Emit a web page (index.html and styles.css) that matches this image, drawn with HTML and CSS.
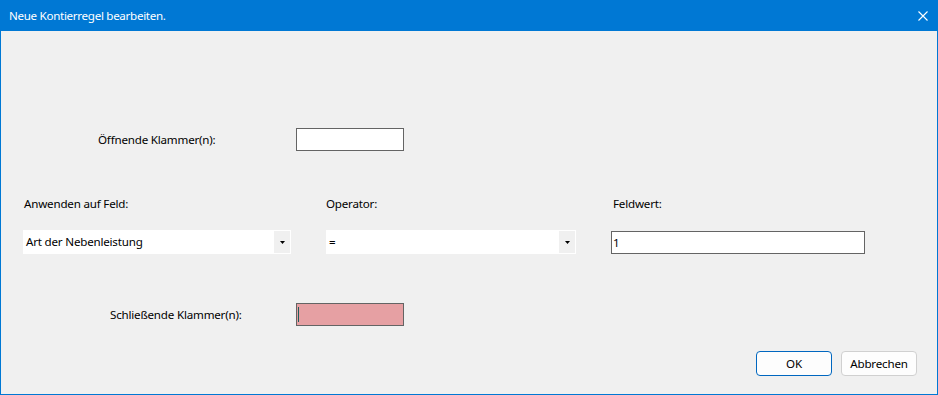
FILE: index.html
```html
<!DOCTYPE html>
<html>
<head>
    <title>Neue Kontierregel bearbeiten.</title>
    <link rel="stylesheet" href="styles.css">
</head>
<body>

<div class="dialog">
    <div class="titlebar">
        <span class="title">Neue Kontierregel bearbeiten.</span>
        <svg class="close" width="10" height="10" viewBox="0 0 10 10">
            <path d="M0.5 0.5 L9.5 9.5 M9.5 0.5 L0.5 9.5" stroke="#fff" stroke-width="1.1" fill="none"/>
        </svg>
    </div>

    <div class="content">
        <div class="bracket-row">
            <div class="bracket-label open">Öffnende Klammer(n):</div>
            <div class="box"></div>
        </div>

        <div class="fields">
            <div class="field">
                <div class="field-label">Anwenden auf Feld:</div>
                <div class="combo wide">
                    <span class="combo-text">Art der Nebenleistung</span>
                    <span class="combo-btn">
                        <svg width="5" height="3" viewBox="0 0 5 3"><polygon points="0,0 5,0 2.5,3" fill="#000"/></svg>
                    </span>
                </div>
            </div>
            <div class="field">
                <div class="field-label op">Operator:</div>
                <div class="combo">
                    <span class="combo-text">=</span>
                    <span class="combo-btn">
                        <svg width="5" height="3" viewBox="0 0 5 3"><polygon points="0,0 5,0 2.5,3" fill="#000"/></svg>
                    </span>
                </div>
            </div>
            <div class="field">
                <div class="field-label val">Feldwert:</div>
                <div class="textbox">1</div>
            </div>
        </div>

        <div class="bracket-row closing">
            <div class="bracket-label close-label">Schließende Klammer(n):</div>
            <div class="box invalid"><span class="caret"></span></div>
        </div>

        <div class="buttons">
            <button class="btn default">OK</button>
            <button class="btn">Abbrechen</button>
        </div>
    </div>
</div>

</body>
</html>
```

FILE: styles.css
```css
body {
    margin: 0;
    font-family: "Noto Sans", "Open Sans", sans-serif;
    font-size: 11.6px;
    letter-spacing: -0.2px;
    color: #000;
}

.dialog {
    width: 938px;
    height: 395px;
    box-sizing: border-box;
    border: 1px solid #0078d4;
    border-top: none;
    background: #f0f0f0;
    display: flex;
    flex-direction: column;
}

.titlebar {
    height: 31px;
    background: #0078d4;
    color: #fff;
    display: flex;
    align-items: center;
    justify-content: space-between;
    padding: 0 9px 0 9px;
    margin: 0 -1px;
    flex-shrink: 0;
}

.title {
    line-height: 16px;
    letter-spacing: -0.3px;
}

.close {
    margin-right: 1px;
}

.content {
    padding-top: 97px;
    display: flex;
    flex-direction: column;
}

.bracket-row {
    display: flex;
    align-items: center;
}

.bracket-label {
    box-sizing: border-box;
    width: 295px;
    line-height: 16px;
}

.bracket-label.open {
    padding-left: 97px;
}

.bracket-label.close-label {
    padding-left: 109px;
}

.box {
    box-sizing: border-box;
    width: 108px;
    height: 23px;
    border: 1px solid #646464;
    background: #fff;
    display: flex;
    align-items: center;
}

.box.invalid {
    background: #e6a0a3;
}

.caret {
    width: 1px;
    height: 15px;
    margin-left: 1px;
    background: #1e5e5a;
}

.fields {
    margin-top: 45px;
    margin-left: 22px;
    display: flex;
    gap: 35px;
}

.field {
    display: flex;
    flex-direction: column;
    gap: 18px;
}

.field-label {
    line-height: 16px;
    padding-left: 1px;
}

.field-label.op {
    padding-left: 0;
}

.field-label.val {
    padding-left: 2px;
}

.combo {
    box-sizing: border-box;
    width: 250px;
    height: 24px;
    background: #fff;
    display: flex;
    align-items: stretch;
    padding: 1px 1px 1px 0;
}

.combo.wide {
    width: 268px;
}

.combo-text {
    flex: 1;
    padding-left: 3px;
    line-height: 22px;
}

.combo-btn {
    width: 16px;
    background: #f0f0f0;
    display: flex;
    align-items: center;
    justify-content: center;
}

.textbox {
    box-sizing: border-box;
    width: 254px;
    height: 23px;
    margin-top: 1px;
    border: 1px solid #646464;
    background: #fff;
    padding-left: 1px;
    line-height: 21px;
}

.closing {
    margin-top: 49px;
}

.buttons {
    margin-top: 25px;
    padding-right: 20px;
    display: flex;
    justify-content: flex-end;
    gap: 9px;
}

.btn {
    box-sizing: border-box;
    width: 76px;
    height: 25px;
    border: 1px solid #d0d0d0;
    border-radius: 4px;
    background: #fdfdfd;
    font-family: "Noto Sans", "Open Sans", sans-serif;
    font-size: 11.6px;
    letter-spacing: -0.2px;
    color: #000;
    padding: 0;
}

.btn.default {
    border-color: #0067c0;
}
```
